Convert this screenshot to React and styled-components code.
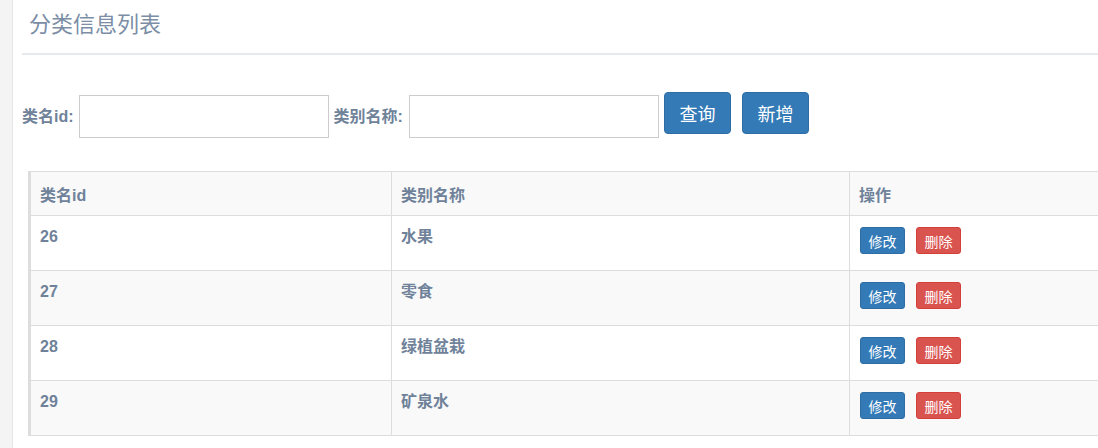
import React from 'react'
import styled, { createGlobalStyle } from 'styled-components'

const categories = [
  { id: 26, name: '水果' },
  { id: 27, name: '零食' },
  { id: 28, name: '绿植盆栽' },
  { id: 29, name: '矿泉水' },
]

const GlobalStyle = createGlobalStyle`
  html, body {
    margin: 0;
    padding: 0;
    height: 100%;
    overflow: hidden;
    background: #fff;
  }
  body {
    font-family: "Liberation Sans", "Noto Sans CJK SC", sans-serif;
    color: #6f8299;
  }
  #root { height: 100%; }
`

const Page = styled.div`
  display: flex;
  height: 100vh;
`

const Sidebar = styled.div`
  flex: 0 0 12px;
  background: #f4f4f4;
  border-right: 1px solid #e6e6e6;
`

const Main = styled.div`
  flex: 1;
  padding-left: 9px;
  min-width: 0;
`

const Title = styled.h1`
  margin: 0;
  padding: 9px 0 12px 7px;
  font-size: 22px;
  line-height: 32px;
  font-weight: normal;
  color: #7b8ea5;
  border-bottom: 2px solid #e6eaee;
`

const SearchBar = styled.div`
  display: flex;
  align-items: flex-start;
  margin-top: 37px;
`

const Label = styled.label`
  margin-top: 3px;
  line-height: 43px;
  font-size: 16px;
  font-weight: bold;
  color: #6f8299;
  margin-right: ${p => p.gap}px;
`

const Input = styled.input`
  box-sizing: border-box;
  width: 250px;
  height: 43px;
  margin-top: 3px;
  margin-right: ${p => p.gap}px;
  border: 1px solid #cccccc;
  padding: 0 8px;
  font-size: 16px;
  outline: none;
`

const Button = styled.button`
  box-sizing: border-box;
  height: ${p => (p.small ? 27 : 42)}px;
  padding: 0 ${p => (p.small ? 7.5 : 14.5)}px;
  font-family: inherit;
  font-size: ${p => (p.small ? 14 : 18)}px;
  color: #fff;
  background: ${p => (p.danger ? '#d9534f' : '#337ab7')};
  border: 1px solid ${p => (p.danger ? '#d43f3a' : '#2e6da4')};
  border-radius: ${p => (p.small ? 3 : 4)}px;
  margin-right: ${p => p.gap || 0}px;
  cursor: pointer;
`

const Table = styled.table`
  margin-top: 33px;
  margin-left: 6px;
  width: 1090px;
  table-layout: fixed;
  border-collapse: collapse;
  border-top: 1px solid #dddddd;
  border-left: 3px solid #dddddd;
  font-size: 16px;
  font-weight: bold;
  color: #6f8299;
`

const Row = styled.tr`
  background: ${p => (p.striped ? '#f9f9f9' : '#ffffff')};
`

const Th = styled.th`
  width: ${p => p.w || 'auto'};
  height: 44px;
  box-sizing: border-box;
  padding: 0 9px;
  text-align: left;
  vertical-align: middle;
  border-right: 1px solid #dddddd;
  border-bottom: 1px solid #dddddd;
  font-weight: bold;
`

const Td = styled.td`
  height: 55px;
  box-sizing: border-box;
  padding: 10px 9px 0;
  line-height: 22px;
  vertical-align: top;
  border-right: 1px solid #dddddd;
  border-bottom: 1px solid #dddddd;
`

const Actions = styled.div`
  display: flex;
  padding-top: 1px;
  padding-left: 1px;
`

export default function App() {
  return (
    <>
      <GlobalStyle />
      <Page>
        <Sidebar />
        <Main>
          <Title>分类信息列表</Title>
          <SearchBar>
            <Label gap={5}>类名id:</Label>
            <Input gap={5} />
            <Label gap={6}>类别名称:</Label>
            <Input gap={5} />
            <Button gap={11}>查询</Button>
            <Button>新增</Button>
          </SearchBar>
          <Table>
            <thead>
              <Row striped>
                <Th w="362px">类名id</Th>
                <Th w="458px">类别名称</Th>
                <Th>操作</Th>
              </Row>
            </thead>
            <tbody>
              {categories.map((c, i) => (
                <Row key={c.id} striped={i % 2 === 1}>
                  <Td>{c.id}</Td>
                  <Td>{c.name}</Td>
                  <Td>
                    <Actions>
                      <Button small gap={11}>修改</Button>
                      <Button small danger>删除</Button>
                    </Actions>
                  </Td>
                </Row>
              ))}
            </tbody>
          </Table>
        </Main>
      </Page>
    </>
  )
}
